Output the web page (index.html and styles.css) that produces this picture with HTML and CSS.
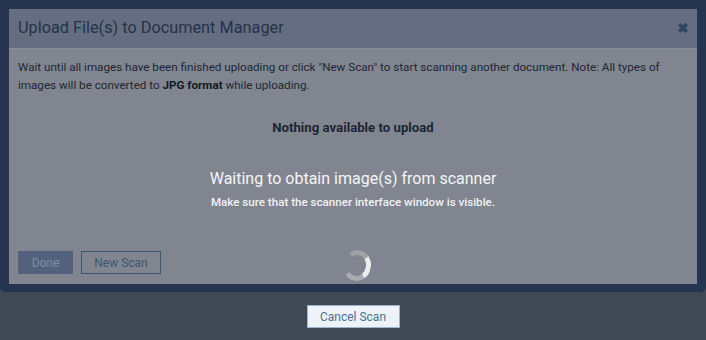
FILE: index.html
```html
<!DOCTYPE html>
<html>
<head>
<meta name="viewport" content="width=device-width, initial-scale=1">
<link rel="stylesheet" href="styles.css">
</head>
<body>

<!-- ************************ scan window ******************************** -->
<div class="scan_frame">
  <div class="modal">
    <div class="modal_header">
      <h3>Upload File(s) to Document Manager</h3>
      <span class="close">&#10006;</span>
    </div>
    <div class="modal_body">
      <p class="note">Wait until all images have been finished uploading or click "New Scan" to start scanning another document. Note: All types of images will be converted to <b>JPG format</b> while uploading.</p>
      <p class="nothing">Nothing available to upload</p>
      <p class="waiting">Waiting to obtain image(s) from scanner</p>
      <p class="hint">Make sure that the scanner interface window is visible.</p>
      <div class="buttons">
        <button class="btn_done">Done</button>
        <button class="btn_new">New Scan</button>
      </div>
      <div class="spinner"></div>
    </div>
  </div>
</div>

<div class="footer">
  <button class="btn_cancel">Cancel Scan</button>
</div>

</body>
</html>
```
FILE: styles.css
```css
* {box-sizing: border-box}
body {
  margin: 0;
  font-family: Roboto, "Liberation Sans", sans-serif;
  background-color: #3f4855;
}

/* navy frame behind the modal */
.scan_frame {
  height: 292px;
  padding: 9px 9px 0 9px;
  background-color: #27344f;
  border-radius: 0 0 5px 5px;
}

.modal {
  height: 275px;
  display: flex;
  flex-direction: column;
}

.modal_header {
  height: 40px;
  display: flex;
  align-items: center;
  justify-content: space-between;
  padding: 0 9px 2px 9px;
  background-color: #646e80;
  border-bottom: 1px solid #8a909b;
}

.modal_header h3 {
  margin: 0;
  font-weight: 400;
  font-size: 16.3px;
  color: #24324a;
}

.close {
  font-size: 14px;
  color: #2b4863;
  font-weight: bold;
  margin-right: -1px;
}

.modal_body {
  position: relative;
  flex: 1;
  padding: 9px 9px 0 9px;
  background-color: #80858f;
}

.note {
  margin: 0;
  font-size: 11.65px;
  line-height: 18px;
  color: #1f2733;
}

.note b {
  color: #141a24;
}

.nothing {
  margin: 26px 0 0 0;
  text-align: center;
  font-size: 13.2px;
  font-weight: bold;
  color: #1d2636;
}

.waiting {
  margin: 34px 0 0 0;
  text-align: center;
  font-size: 16px;
  color: #f4f5f7;
}

.hint {
  margin: 7px 0 0 0;
  text-align: center;
  font-size: 11.6px;
  font-weight: 500;
  color: #f0f1f3;
}

.buttons {
  display: flex;
  gap: 8px;
  margin-top: 42px;
}

.buttons button {
  height: 23px;
  font-family: inherit;
  font-size: 12px;
  padding: 0;
}

.btn_done {
  width: 55px;
  border: 1px solid #52627e;
  background-color: #52627e;
  color: #7f8ca1;
}

.btn_new {
  width: 80px;
  border: 1px solid #3c566f;
  background-color: transparent;
  color: #3c566f;
}

/* loading ring over the body */
.spinner {
  position: absolute;
  left: 334px;
  top: 201px;
  width: 28px;
  height: 31px;
  border-radius: 50%;
  border: 5px solid transparent;
  border-right-color: #ececec;
  border-top-color: #9fa1a5;
  border-bottom-color: #a9abaf;
  transform: rotate(10deg);
}

.footer {
  display: flex;
  justify-content: center;
  padding-top: 13px;
}

.btn_cancel {
  width: 93px;
  height: 23px;
  padding: 0;
  font-family: inherit;
  font-size: 12px;
  color: #4d6f8f;
  background-color: #eef3fa;
  border: 1px solid #9db5cc;
}
```
